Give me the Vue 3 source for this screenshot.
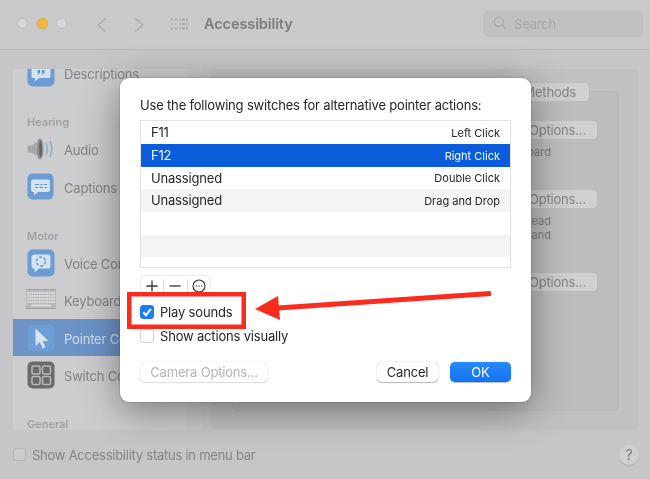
<script setup>
const sections = [
  { items: [{ name: 'Descriptions', icon: 'desc' }] },
  { title: 'Hearing', items: [{ name: 'Audio', icon: 'audio' }, { name: 'Captions', icon: 'captions' }] },
  { title: 'Motor', items: [
    { name: 'Voice Control', icon: 'voice' },
    { name: 'Keyboard', icon: 'keyboard' },
    { name: 'Pointer Control', icon: 'pointer', active: true },
    { name: 'Switch Control', icon: 'switch' }
  ] },
  { title: 'General', items: [] }
]
const switches = [
  { key: 'F11', action: 'Left Click', h: 23 },
  { key: 'F12', action: 'Right Click', selected: true, h: 23 },
  { key: 'Unassigned', action: 'Double Click', h: 22 },
  { key: 'Unassigned', action: 'Drag and Drop', striped: true, h: 23 },
  { key: '', action: '', h: 23 },
  { key: '', action: '', striped: true, h: 22 },
  { key: '', action: '', h: 10 }
]
const options = [
  { lines: ['keyboard'], cls: 'opt-a' },
  { lines: ['instead', 'and'], cls: 'opt-b' },
  { lines: [], cls: 'opt-c' }
]
</script>

<template>
  <div class="window">
    <header class="titlebar">
      <div class="lights">
        <span class="light"></span>
        <span class="light orange"></span>
        <span class="light"></span>
      </div>
      <svg class="nav" width="47" height="14" viewBox="0 0 47 14" fill="none" stroke="#acacae" stroke-width="1.300">
        <path d="M8.500 .5 1 7l7.500 6.500" />
        <path d="M38.500 .5 46 7l-7.500 6.500" />
      </svg>
      <div class="apps">
        <i v-for="n in 15" :key="n"></i>
      </div>
      <div class="title">Accessibility</div>
      <div class="search">
        <svg width="14" height="14" viewBox="0 0 14 14" fill="none" stroke="#a8a8aa" stroke-width="1.200">
          <circle cx="5.800" cy="5.800" r="4.600" />
          <path d="M9.200 9.200 13 13" />
        </svg>
        <span class="search-text">Search</span>
      </div>
    </header>

    <main class="body">
      <aside class="sidebar">
        <div class="side-scroll">
          <template v-for="(s, i) in sections" :key="i">
            <div v-if="s.title" class="side-head">{{ s.title }}</div>
            <div v-for="it in s.items" :key="it.name" class="side-row" :class="{ active: it.active }">
              <svg class="side-icon" width="30" height="30" viewBox="0 0 30 30">
                <template v-if="it.icon === 'desc'">
                  <rect x="1.500" y="1.500" width="27" height="27" rx="5" fill="#6b9cd3" />
                  <path d="M7 8h16a1.500 1.500 0 0 1 1.500 1.500v9a1.500 1.500 0 0 1-1.500 1.500H13l-4 3.500V20H7a1.500 1.500 0 0 1-1.500-1.500v-9A1.500 1.500 0 0 1 7 8z" fill="#d5e2f1" />
                  <path d="M11.500 12h2.500v2.500l-1.500 2h-1l.6-2h-.6zM16 12h2.500v2.500l-1.500 2h-1l.6-2H16z" fill="#5c8fca" />
                </template>
                <template v-else-if="it.icon === 'audio'">
                  <path d="M1.500 11.500h4l5-3.500v14l-5-3.500h-4z" fill="#a8a8aa" />
                  <ellipse cx="14" cy="15" rx="3.500" ry="10.500" fill="#8f8f91" />
                  <ellipse cx="14.500" cy="15" rx="1.300" ry="8" fill="#5f5f61" />
                  <path d="M20 9q2.500 6 0 12M24 7q3.500 8 0 16" fill="none" stroke="#7fa8d3" stroke-width="1.300" />
                </template>
                <template v-else-if="it.icon === 'captions'">
                  <rect x="1.500" y="1.500" width="26" height="26" rx="5" fill="#6b9cd3" />
                  <path d="M7 7.500h15a2 2 0 0 1 2 2V18a2 2 0 0 1-2 2H12l-4 3.500V20H7a2 2 0 0 1-2-2V9.500a2 2 0 0 1 2-2z" fill="#d5e2f1" />
                  <path d="M9 12.500h4M14.500 12.500h2M18 12.500h3M9 15.500h3M13.500 15.500h3.500M18.500 15.500h2.500" stroke="#5c8fca" stroke-width="1" />
                </template>
                <template v-else-if="it.icon === 'voice'">
                  <rect x="1.500" y="1.500" width="27" height="27" rx="5" fill="#6b9cd3" />
                  <path d="M8 6.500h14a2.500 2.500 0 0 1 2.500 2.500v9a2.500 2.500 0 0 1-2.500 2.500H13l-4.500 4v-4H8A2.500 2.500 0 0 1 5.500 18V9A2.500 2.500 0 0 1 8 6.500z" fill="#d5e2f1" />
                  <circle cx="15" cy="13.500" r="4.500" fill="none" stroke="#5c8fca" stroke-width="1.300" stroke-dasharray="3 1.700" />
                </template>
                <template v-else-if="it.icon === 'keyboard'">
                  <rect x="-1" y="4.500" width="32" height="19" rx="1.500" fill="#b9b9bb" stroke="#a0a0a2" />
                  <path d="M1 8h28M1 11h28M1 14h28M1 17h28" stroke="#dbdbdd" stroke-width="1.800" stroke-dasharray="1.800 .6" />
                  <path d="M5 20.500h20" stroke="#dbdbdd" stroke-width="1.800" />
                </template>
                <template v-else-if="it.icon === 'pointer'">
                  <rect x="1.500" y="1.500" width="27" height="27" rx="5" fill="#6e9ed6" />
                  <path d="M9.500 5.500v17.500l4.200-4 3 6.500 2.800-1.300-2.900-6.200h5.800z" fill="#dbe5f2" />
                </template>
                <template v-else>
                  <rect x="1.500" y="1.500" width="27" height="27" rx="5" fill="#6a6a6c" />
                  <g fill="none" stroke="#b9b9bb" stroke-width="1.500">
                    <rect x="6" y="6" width="8" height="8" rx="1.500" />
                    <rect x="16.500" y="6" width="8" height="8" rx="1.500" />
                    <rect x="6" y="16.500" width="8" height="8" rx="1.500" />
                    <rect x="16.500" y="16.500" width="8" height="8" rx="1.500" />
                  </g>
                </template>
              </svg>
              <span class="side-name">{{ it.name }}</span>
            </div>
          </template>
        </div>
      </aside>

      <section class="panel">
        <button class="bg-btn methods">Control Methods</button>
        <div class="inner">
          <div v-for="o in options" :key="o.cls" class="opt" :class="o.cls">
            <button class="bg-btn">Options...</button>
            <div class="note">
              <div v-for="l in o.lines" :key="l">{{ l }}</div>
            </div>
          </div>
        </div>
      </section>
    </main>

    <footer class="foot">
      <span class="bg-check"></span>
      <span class="foot-label">Show Accessibility status in menu bar</span>
      <span class="help">?</span>
    </footer>

    <div class="dialog">
      <p class="lead">Use the following switches for alternative pointer actions:</p>
      <div class="list">
        <div
          v-for="(r, i) in switches"
          :key="i"
          class="list-row"
          :class="{ selected: r.selected, striped: r.striped }"
          :style="{ height: r.h + 'px' }"
        >
          <span class="key">{{ r.key }}</span>
          <span class="action">{{ r.action }}</span>
        </div>
      </div>
      <div class="seg">
        <span class="seg-btn">
          <svg width="12" height="12" viewBox="0 0 12 12" stroke="#333" stroke-width="1.300"><path d="M6 .5v11M.5 6h11" /></svg>
        </span>
        <span class="seg-btn">
          <svg width="12" height="12" viewBox="0 0 12 12" stroke="#333" stroke-width="1.300"><path d="M.5 6h11" /></svg>
        </span>
        <span class="seg-btn">
          <svg width="14" height="14" viewBox="0 0 14 14" fill="none" stroke="#333" stroke-width="1.100">
            <circle cx="7" cy="7" r="6" />
            <path d="M3.700 7h1M6.500 7h1M9.300 7h1" stroke-width="1.300" />
          </svg>
        </span>
      </div>
      <label class="check-row first">
        <span class="check on">
          <svg width="14" height="14" viewBox="0 0 14 14" fill="none" stroke="#fff" stroke-width="2"><path d="M3.300 7.300 6 10.200 10.800 3.800" /></svg>
        </span>
        <span>Play sounds</span>
      </label>
      <label class="check-row">
        <span class="check"></span>
        <span>Show actions visually</span>
      </label>
      <div class="actions">
        <button class="btn disabled">Camera Options...</button>
        <span class="spacer"></span>
        <button class="btn">Cancel</button>
        <button class="btn primary">OK</button>
      </div>
    </div>

    <svg class="callout" width="650" height="479" viewBox="0 0 650 479">
      <rect x="129.250" y="294.250" width="114.500" height="32.500" fill="none" stroke="#fb2c1f" stroke-width="4.500" />
      <path d="M491 293.500 278 308" stroke="#fb2c1f" stroke-width="5" />
      <path d="M255 309 278 296 280 320z" fill="#fb2c1f" />
    </svg>
  </div>
</template>

<style>
html, body { margin: 0; background: #c6c6c8; }
</style>

<style scoped>
* { box-sizing: border-box; }
.window {
  position: relative;
  width: 650px;
  height: 479px;
  overflow: hidden;
  display: flex;
  flex-direction: column;
  background: #c6c6c8;
  font-family: Inter, "Liberation Sans", sans-serif;
  font-size: 13px;
  letter-spacing: -.18px;
  color: #262626;
  filter: blur(.3px);
}
.titlebar {
  height: 50px;
  flex: none;
  display: flex;
  align-items: center;
  background: #c9c9cb;
  border-bottom: 1px solid #b9b9bb;
  padding: 0 7px 3px 17px;
}
.lights { display: flex; gap: 8.500px; width: 80px; }
.light {
  width: 11px; height: 11px; border-radius: 50%;
  background: #d7d7da; border: 1px solid #bebec0;
}
.light.orange { background: #f7b73a; border-color: #dfa233; }
.nav { flex: none; margin-top: 3px; }
.apps {
  flex: none;
  display: grid;
  grid-template-columns: repeat(5, 2px);
  gap: 2.300px 1.750px;
  margin: 2px 0 0 27px;
  width: 18px;
}
.apps i { width: 2.300px; height: 2.300px; background: #adadaf; border-radius: 1px; }
.title {
  margin-left: 15px;
  font-size: 14.500px;
  font-weight: 600;
  letter-spacing: -.1px;
  color: #7c7c7e;
  flex: 1;
}
.search {
  width: 160px; height: 27px;
  display: flex; align-items: center; gap: 7px;
  padding-left: 10px;
  background: #c1c1c3;
  border-radius: 6px;
  color: #a8a8aa;
}
.search-text { padding-top: 2px; }
.body {
  flex: none;
  height: 361px;
  margin-top: 19px;
  padding: 0 11px 0 13px;
  display: flex;
  gap: 9px;
}
.sidebar {
  width: 189px;
  overflow: hidden;
  background: #cdcdcf;
  border-right: 15px solid #c9c9cb;
  color: #848486;
}
.side-scroll { margin-top: -14.750px; }
.side-row {
  height: 37.500px;
  display: flex;
  align-items: center;
  padding-left: 13px;
  gap: 8px;
  white-space: nowrap;
  color: #828284;
}
.side-name { padding-top: 2px; }
.side-icon { flex: none; }
.side-row.active { background: #6c93c8; color: #cfdcee; margin-right: -15px; position: relative; }
.side-head {
  height: 38.500px;
  display: flex;
  align-items: flex-end;
  padding: 0 0 1px 14px;
  line-height: 13px;
  font-size: 11px;
  font-weight: 600;
  letter-spacing: 0;
  color: #a0a0a2;
}
.panel {
  flex: 1;
  display: flex;
  flex-direction: column;
  padding: 13px 20px 19px 21px;
  background: #c1c1c3;
  border-radius: 5px;
}
.bg-btn {
  height: 20px;
  padding: 0 11px;
  font: inherit;
  letter-spacing: inherit;
  color: #858587;
  background: #d0d0d2;
  border: 1px solid #bcbcbe;
  border-radius: 5px;
  white-space: nowrap;
  position: relative;
  z-index: 1;
}
.methods { align-self: flex-end; margin-right: 29px; padding: 0 13px; }
.inner {
  flex: 1;
  margin-top: -11px;
  border: 1px solid #b9b9bb;
  border-radius: 5px;
  background: #bdbdbf;
  padding: 28px 20px 0 0;
  display: flex;
  flex-direction: column;
  align-items: flex-end;
}
.opt { display: flex; flex-direction: column; align-items: flex-end; font-size: 11px; letter-spacing: 0; }
.opt .bg-btn { font-size: 13px; letter-spacing: -.18px; }
.opt-a { height: 69px; }
.opt-b { height: 83px; }
.note { margin: 5px 47px 0 0; line-height: 14px; text-align: right; color: #7d7d7f; }
.foot {
  flex: 1;
  display: flex;
  align-items: center;
  padding: 0 11px 0 13px;
  gap: 6px;
  letter-spacing: -.25px;
  color: #848486;
}
.bg-check { width: 13px; height: 13px; border: 1px solid #b5b5b7; border-radius: 3px; background: #cbcbcd; }
.foot-label { flex: 1; }
.help {
  width: 20px; height: 20px; border-radius: 50%;
  background: #d0d0d2;
  text-align: center;
  line-height: 20px;
  font-size: 14px;
  color: #767678;
  box-shadow: 0 1px 1px rgba(0, 0, 0, .12);
}
.dialog {
  position: absolute;
  z-index: 2;
  left: 120px;
  top: 78px;
  width: 411px;
  height: 324px;
  padding: 19px 20px 0;
  background: #fff;
  border-radius: 9px;
  box-shadow: 0 8px 38px rgba(0, 0, 0, .42), 0 0 2px rgba(0, 0, 0, .3);
  display: flex;
  flex-direction: column;
}
.lead { margin: 0 0 7px; line-height: 16px; }
.list {
  height: 148px;
  border: 1px solid #e2e2e2;
  background: #fff;
  flex: none;
}
.list-row {
  display: flex;
  justify-content: space-between;
  align-items: center;
  padding: 0 10px;
}
.key { margin-top: -1px; }
.list-row.striped { background: #f3f5f5; }
.list-row.selected { background: #0b5cdb; color: #f4f8ff; }
.action { font-size: 11px; letter-spacing: 0; }
.seg {
  display: flex;
  width: 71px;
  height: 19px;
  margin-top: 7px;
  border-radius: 5px 5px 0 0;
  border: 1px solid #ececec;
  border-bottom: 0;
  flex: none;
}
.seg-btn {
  flex: 1;
  display: flex;
  align-items: center;
  justify-content: center;
  border-right: 1px solid #dedede;
  height: 14px;
  margin-top: 3px;
}
.seg-btn:last-child { border-right: 0; }
.check-row {
  display: flex;
  align-items: center;
  gap: 6px;
  height: 24px;
  line-height: 16px;
}
.check-row.first { margin-top: 6px; }
.check {
  width: 14px; height: 14px;
  border: 1px solid #d2d2d2;
  border-radius: 3px;
  background: #fff;
  flex: none;
}
.check.on { background: #1a7df6; border-color: #1a7df6; }
.check.on svg { display: block; margin: -1px; }
.actions { display: flex; gap: 12px; margin-top: 14px; }
.spacer { flex: 1; }
.btn {
  height: 20px;
  width: 61px;
  padding: 0;
  font: inherit;
  letter-spacing: inherit;
  color: #2a2a2a;
  background: #fff;
  border: 0;
  border-radius: 5px;
  box-shadow: 0 0 1px rgba(0, 0, 0, .4), 0 1px 1px rgba(0, 0, 0, .25);
}
.btn.disabled { width: 128px; color: #b4b4b4; box-shadow: 0 0 1px rgba(0, 0, 0, .3), 0 1px 1px rgba(0, 0, 0, .12); }
.btn.primary { color: #fff; background: linear-gradient(#2a8af8, #1173f3); }
.callout { position: absolute; z-index: 3; left: 0; top: 0; pointer-events: none; }
</style>
